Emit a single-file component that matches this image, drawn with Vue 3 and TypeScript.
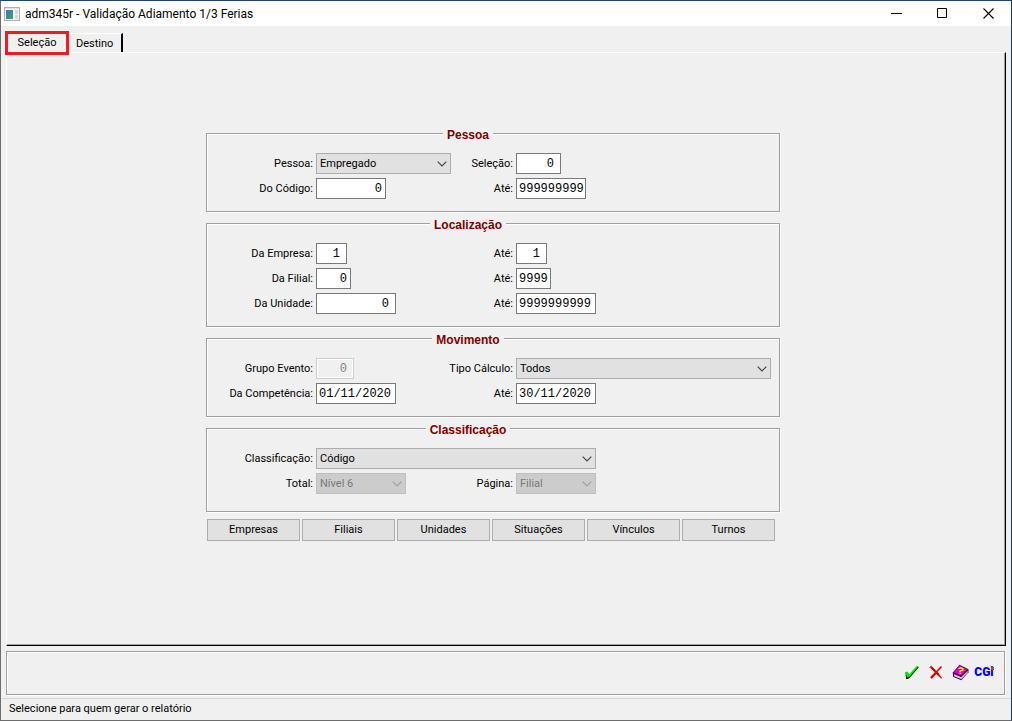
<script setup lang="ts">
import { reactive, ref } from 'vue'

interface Field {
  id: string
  label: string
  value: string
  size: string
  kind: 'text' | 'select'
  full?: boolean
  disabled?: boolean
}

interface Group {
  title: string
  roomy?: boolean
  rows: Field[][]
}

const tabs = ['Seleção', 'Destino']
const activeTab = ref('Seleção')

const groups = reactive<Group[]>([
  {
    title: 'Pessoa',
    rows: [
      [
        { id: 'pessoa', label: 'Pessoa:', value: 'Empregado', size: 's135', kind: 'select' },
        { id: 'selecao', label: 'Seleção:', value: '0', size: 'n5', kind: 'text' },
      ],
      [
        { id: 'cod-de', label: 'Do Código:', value: '0', size: 'n9', kind: 'text' },
        { id: 'cod-ate', label: 'Até:', value: '999999999', size: 'n9', kind: 'text', full: true },
      ],
    ],
  },
  {
    title: 'Localização',
    rows: [
      [
        { id: 'emp-de', label: 'Da Empresa:', value: '1', size: 'n3', kind: 'text' },
        { id: 'emp-ate', label: 'Até:', value: '1', size: 'n3', kind: 'text' },
      ],
      [
        { id: 'fil-de', label: 'Da Filial:', value: '0', size: 'n4', kind: 'text' },
        { id: 'fil-ate', label: 'Até:', value: '9999', size: 'n4', kind: 'text', full: true },
      ],
      [
        { id: 'uni-de', label: 'Da Unidade:', value: '0', size: 'n10', kind: 'text' },
        { id: 'uni-ate', label: 'Até:', value: '9999999999', size: 'n10', kind: 'text', full: true },
      ],
    ],
  },
  {
    title: 'Movimento',
    rows: [
      [
        { id: 'grupo', label: 'Grupo Evento:', value: '0', size: 'n4b', kind: 'text', disabled: true },
        { id: 'calculo', label: 'Tipo Cálculo:', value: 'Todos', size: 's255', kind: 'select' },
      ],
      [
        { id: 'comp-de', label: 'Da Competência:', value: '01/11/2020', size: 'n10', kind: 'text', full: true },
        { id: 'comp-ate', label: 'Até:', value: '30/11/2020', size: 'n10', kind: 'text', full: true },
      ],
    ],
  },
  {
    title: 'Classificação',
    roomy: true,
    rows: [
      [{ id: 'classif', label: 'Classificação:', value: 'Código', size: 's280', kind: 'select' }],
      [
        { id: 'total', label: 'Total:', value: 'Nível 6', size: 's90', kind: 'select', disabled: true },
        { id: 'pagina', label: 'Página:', value: 'Filial', size: 's80', kind: 'select', disabled: true },
      ],
    ],
  },
])

const filters = ['Empresas', 'Filiais', 'Unidades', 'Situações', 'Vínculos', 'Turnos']
</script>

<template>
  <div class="window">
    <header class="titlebar">
      <svg class="app-icon" width="16" height="14" viewBox="0 0 16 14" shape-rendering="crispEdges" aria-hidden="true">
        <defs>
          <linearGradient id="screen" x1="0" y1="0" x2="1" y2="1">
            <stop offset="0" stop-color="#3f74b5" />
            <stop offset="1" stop-color="#3fa56c" />
          </linearGradient>
        </defs>
        <rect x="0.5" y="0.5" width="15" height="13" fill="#f4f4f4" stroke="#a9b0b4" />
        <rect x="1" y="1" width="14" height="1" fill="#dfe3e6" />
        <rect x="2" y="3" width="7" height="9" fill="url(#screen)" />
        <rect x="11" y="3" width="3" height="4" fill="#d5d9db" />
        <rect x="11" y="8" width="3" height="4" fill="#d5d9db" />
      </svg>
      <h1>adm345r - Validação Adiamento 1/3 Ferias</h1>
      <div class="win-buttons">
        <button type="button" aria-label="Minimizar">
          <svg width="11" height="11" viewBox="0 0 11 11"><path d="M0 5.5h11" stroke="#000" /></svg>
        </button>
        <button type="button" aria-label="Maximizar">
          <svg width="11" height="11" viewBox="0 0 11 11"><path d="M.5.5h9v9h-9z" fill="none" stroke="#000" /></svg>
        </button>
        <button type="button" aria-label="Fechar">
          <svg width="11" height="11" viewBox="0 0 11 11"><path d="M.5.5l10 10M10.500.5l-10 10" stroke="#000" stroke-width="1.1" /></svg>
        </button>
      </div>
    </header>

    <nav class="tabs" role="tablist">
      <button
        v-for="t in tabs"
        :key="t"
        type="button"
        role="tab"
        class="tab"
        :class="{ active: t === activeTab }"
        :aria-selected="t === activeTab"
        @click="activeTab = t"
      >{{ t }}</button>
    </nav>

    <main class="panel">
      <form class="form" @submit.prevent>
        <fieldset v-for="g in groups" :key="g.title" class="group" :class="{ roomy: g.roomy }">
          <legend>{{ g.title }}</legend>
          <div class="rows">
            <div v-for="(row, i) in g.rows" :key="i" class="row">
              <template v-for="f in row" :key="f.id">
                <label :for="f.id">{{ f.label }}</label>
                <div v-if="f.kind === 'select'" class="select" :class="f.size">
                  <select :id="f.id" v-model="f.value" :disabled="f.disabled">
                    <option :value="f.value">{{ f.value }}</option>
                  </select>
                  <svg class="arrow" :class="{ dim: f.disabled }" width="10" height="6" viewBox="0 0 10 6" aria-hidden="true">
                    <path d="M.7.7L5 5L9.300.7" fill="none" stroke="currentColor" stroke-width="1.2" />
                  </svg>
                </div>
                <input
                  v-else
                  :id="f.id"
                  v-model="f.value"
                  type="text"
                  :class="[f.size, { full: f.full }]"
                  :disabled="f.disabled"
                />
              </template>
            </div>
          </div>
        </fieldset>
        <div class="filters">
          <button v-for="b in filters" :key="b" type="button">{{ b }}</button>
        </div>
      </form>
    </main>

    <section class="actions">
      <button type="button" aria-label="Confirmar">
        <svg width="16" height="16" viewBox="0 0 16 16">
          <path d="M1.500 8L3.500 8L5.500 11L13.500 3L15 3L6 13.500L4 15H2z" fill="#052805" />
          <path d="M1.500 8L3.500 7.500L5 10.500L12.500 2L14.700 2L5 13.300L3 13.300z" fill="#00f000" />
        </svg>
      </button>
      <button type="button" aria-label="Cancelar">
        <svg width="16" height="16" viewBox="0 0 16 16">
          <path d="M2.500 2.500L13.500 14M13.500 2.500L3 14" fill="none" stroke="#d80000" stroke-width="1.500" />
          <path d="M3 3L11 11M9 7.500L3 14" fill="none" stroke="#e00000" stroke-width="2.200" />
          <path d="M1.500 3.500L3.500 2M12 13L13.500 14.500" stroke="#8a5a4a" />
        </svg>
      </button>
      <button type="button" aria-label="Ajuda">
        <svg width="17" height="17" viewBox="0 0 17 17">
          <path d="M.8 8.500L7.500.8l9 4.500v3L9.300 16.300 1 12.800z" fill="#4c0054" />
          <path d="M1.800 8.300L7.500 1.600 15 5.400 9 11.600z" fill="#dc00dc" />
          <path d="M2 10.300l7.200 3L15.500 7v1.500L9.300 15 2.300 12.200z" fill="#fff" />
          <path d="M2.500 11.300l6.800 2.700 6-6.300" fill="none" stroke="#9a8a9c" stroke-width=".6" />
          <path d="M6.500 4.600l2.200-.8 2.200 1v1.300L8 7v1M7.500 9.200h1.700" fill="none" stroke="#ffe600" stroke-width="1.500" />
        </svg>
      </button>
      <button type="button" class="cgi">CGi</button>
    </section>

    <footer class="status">Selecione para quem gerar o relatório</footer>
  </div>
</template>

<style>
body {
  margin: 0;
  background: #f0f0f0;
}
</style>

<style scoped>
.window {
  display: flex;
  flex-direction: column;
  box-sizing: border-box;
  min-height: 100vh;
  border: 1px solid #6d6d6d;
  border-top-color: #1d4670;
  border-right-color: #1b3863;
  background: #f0f0f0;
  color: #000;
  font: 11px/14px Roboto, "Liberation Sans", Arial, sans-serif;
}
button,
input,
select {
  box-sizing: border-box;
  margin: 0;
  border-radius: 0;
  color: inherit;
  font: inherit;
}
.titlebar {
  display: flex;
  align-items: center;
  height: 25px;
  padding-left: 3px;
  background: #fff;
}
h1 {
  flex: 1;
  margin: 0 0 0 5px;
  font: 12px/16px Roboto, "Noto Sans", sans-serif;
}
.win-buttons {
  display: flex;
  height: 100%;
}
.win-buttons button {
  display: flex;
  align-items: center;
  justify-content: center;
  width: 46px;
  padding: 0;
  border: 0;
  background: none;
}
.tabs {
  position: relative;
  z-index: 1;
  display: flex;
  align-items: flex-end;
  margin: 5px 0 -3px 4px;
}
.tab {
  height: 19px;
  margin-bottom: 3px;
  padding: 2px 8px 0 7px;
  border: 0;
  border-top: 1px solid #fff;
  border-right: 2px solid #000;
  background: #f0f0f0;
}
.tab.active {
  width: 64px;
  height: 24px;
  margin-bottom: 0;
  padding: 0;
  border: 3px solid #ed1c24;
}
.panel {
  flex: 1;
  margin: 0 5px;
  border: 1px solid #fff;
  border-right-color: #000;
  border-bottom-color: #000;
  box-shadow: inset -1px -1px #a0a0a0;
}
.form {
  width: 574px;
  margin: 71px 0 20px 199px;
}
.group {
  min-width: 0;
  margin: 0 0 2px;
  padding: 10px 50px 12px 0;
  border: 1px solid #a0a0a0;
  box-shadow: 1px 1px #fff, inset 1px 1px #fff;
}
.group.roomy {
  padding-bottom: 17px;
}
legend {
  margin: 0 auto;
  padding: 4px 4px 1px;
  background: #f0f0f0;
  color: #800000;
  font: bold 12px/14px "Liberation Sans", Arial, sans-serif;
}
.rows {
  display: grid;
  gap: 4px;
}
.row {
  display: grid;
  grid-template-columns: 106px 130px 64px 1fr;
  column-gap: 3px;
  align-items: center;
}
label {
  text-align: right;
  white-space: nowrap;
}
input {
  height: 21px;
  padding: 0 3px 0 2px;
  border: 1px solid #7a7a7a;
  background: #fff;
  font: 12px/19px "Liberation Mono", "Courier New", monospace;
  text-align: right;
}
input.full {
  padding-right: 0;
  text-align: left;
}
input:disabled {
  border-color: #ccc;
  background: #f0f0f0;
  box-shadow: inset 0 0 0 1px #fff;
  color: #838383;
}
.n3 { width: 31px; padding-right: 6px; }
.n4 { width: 35px; }
.n4b { width: 38px; padding-right: 6px; }
.n5 { width: 45px; padding-right: 6px; }
.n9 { width: 70px; }
.n10 { width: 80px; padding-right: 6px; }
.s80 { width: 80px; }
.s90 { width: 90px; }
.s135 { width: 135px; }
.s255 { width: 255px; }
.s280 { width: 280px; }
.select {
  position: relative;
  height: 21px;
}
select {
  display: block;
  width: 100%;
  height: 21px;
  padding: 0 18px 0 3px;
  border: 1px solid #adadad;
  background: #e1e1e1;
  appearance: none;
}
select:disabled {
  border-color: #bfbfbf;
  background: #ccc;
  color: #787878;
  opacity: 1;
}
.arrow {
  position: absolute;
  top: 8px;
  right: 4px;
  color: #444;
  pointer-events: none;
}
.arrow.dim {
  color: #a0a0a0;
}
.filters {
  display: flex;
  gap: 2px;
  margin: 7px 5px 0 1px;
}
.filters button {
  flex: 1;
  height: 22px;
  padding: 0;
  border: 1px solid #adadad;
  background: #e1e1e1;
}
.actions {
  display: flex;
  align-items: center;
  justify-content: flex-end;
  gap: 4px;
  height: 40px;
  margin: 5px 6px 3px 5px;
  padding: 0 10px 2px 0;
  border: 1px solid #a0a0a0;
  box-shadow: 1px 1px #fff, inset 1px 1px #fff;
}
.actions button {
  display: flex;
  align-items: center;
  justify-content: center;
  width: 20px;
  height: 20px;
  padding: 0;
  border: 0;
  background: none;
}
.actions .cgi {
  position: relative;
  color: #00f;
  font: 900 12px/14px Roboto, sans-serif;
}
.cgi::after {
  content: "";
  position: absolute;
  top: 5px;
  right: 0;
  width: 3px;
  height: 3px;
  background: #e03030;
}
.status {
  padding: 3px 8px 4px;
  border-top: 1px solid #d7d7d7;
}
</style>
